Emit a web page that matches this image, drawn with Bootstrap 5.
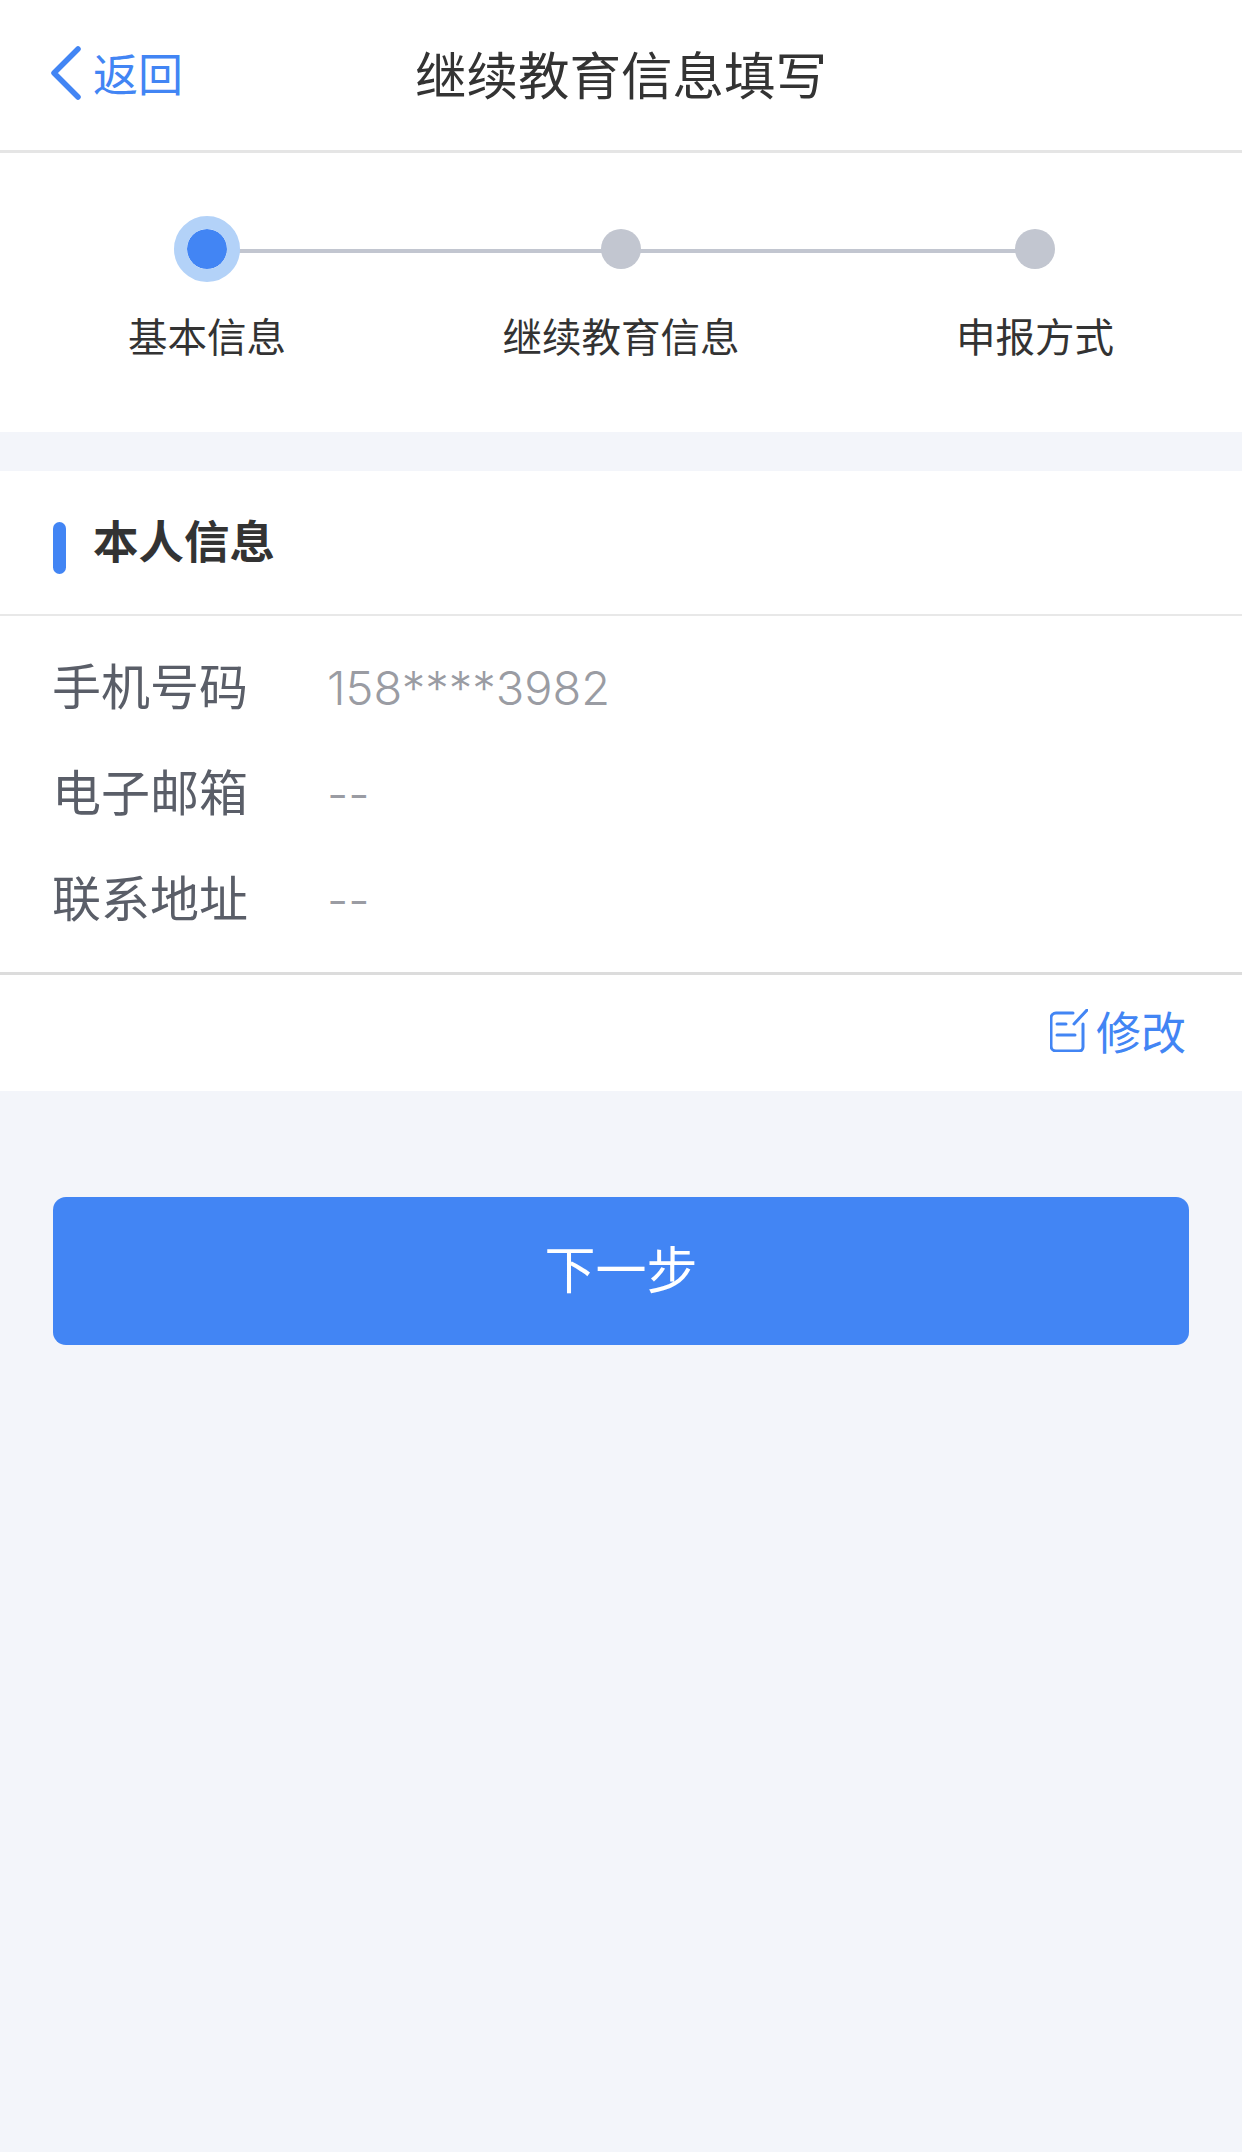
<!DOCTYPE html>
<html lang="zh">
<head>
    <meta charset="utf-8">
    <title>继续教育信息填写</title>
    <link href="https://cdn.jsdelivr.net/npm/bootstrap@5.3.0/dist/css/bootstrap.min.css" rel="stylesheet">
    <style>
        body { background: #f3f5fa; font-family: "Noto Sans CJK SC", sans-serif; color: #333; }
        .top-bar { height: 153px; display: grid; grid-template-columns: 1fr auto 1fr; align-items: center; border-bottom: 3px solid #e5e5e5; background: #fff; padding: 0 51px 5px; }
        .back-link { display: flex; align-items: center; gap: 12px; color: #4285f4; font-size: 45px; line-height: 1; text-decoration: none; }
        .page-title { font-size: 51.5px; line-height: 1; font-weight: 400; color: #333; }
        .steps { background: #fff; height: 279px; padding-top: 63px; margin-bottom: 39px; }
        .step-item { position: relative; display: flex; flex-direction: column; align-items: center; width: 414px; }
        .step-dot-wrap { height: 66px; display: flex; align-items: center; justify-content: center; position: relative; z-index: 1; }
        .step-dot { width: 40px; height: 40px; border-radius: 50%; background: #c2c6d0; }
        .step-dot.on { width: 66px; height: 66px; border: 13px solid #b3d2f8; background: #4285f4; background-clip: padding-box; }
        .step-link { position: absolute; top: 33px; left: 207px; width: 414px; height: 4px; background: #c2c6d0; }
        .step-name { margin-top: 33px; font-size: 39.5px; line-height: 1; color: #333; }
        .info-head { background: #fff; height: 145px; display: flex; align-items: center; gap: 27px; padding: 0 53px; border-bottom: 2px solid #e8e8e8; }
        .info-mark { width: 13px; height: 52px; margin-top: 10px; border-radius: 7px; background: #4285f4; }
        .info-title { font-size: 45.5px; font-weight: 700; line-height: 1; margin: 0 0 6px; color: #333; }
        .info-body { background: #fff; padding: 18px 53px 20px 52px; border-bottom: 3px solid #dcdcdc; }
        .info-row { display: flex; align-items: center; height: 106px; }
        .info-key { width: 275px; padding-bottom: 8px; font-size: 49px; line-height: 1; color: #5a5e68; }
        .info-val { font-family: Inter, sans-serif; font-weight: 300; font-size: 47px; line-height: 1; color: #9a9ca3; }
        .info-foot { background: #fff; height: 116px; display: flex; align-items: center; justify-content: flex-end; gap: 8px; padding: 0 56px 5px 0; color: #4285f4; font-size: 45px; line-height: 1; }
        .next-wrap { padding: 106px 53px 0; }
        .next-btn { height: 148px; padding-bottom: 14px; font-size: 51px; line-height: 1; color: #fff; background: #4285f4; border: 0; border-radius: 13px; }
    </style>
</head>
<body>
    <!-- Header -->
    <div class="top-bar">
        <a class="back-link" href="#">
            <svg width="30" height="54" viewBox="0 0 30 54" fill="none" stroke="#4285f4" stroke-width="5.5" stroke-linecap="round" stroke-linejoin="round"><path d="M27 3 3 27l24 24"/></svg>
            <span>返回</span>
        </a>
        <h1 class="page-title mb-0">继续教育信息填写</h1>
        <div></div>
    </div>

    <!-- Steps -->
    <div class="steps d-flex">
        <div class="step-item">
            <div class="step-link"></div>
            <div class="step-dot-wrap"><div class="step-dot on"></div></div>
            <div class="step-name">基本信息</div>
        </div>
        <div class="step-item">
            <div class="step-link"></div>
            <div class="step-dot-wrap"><div class="step-dot"></div></div>
            <div class="step-name">继续教育信息</div>
        </div>
        <div class="step-item">
            <div class="step-dot-wrap"><div class="step-dot"></div></div>
            <div class="step-name">申报方式</div>
        </div>
    </div>

    <!-- Personal info -->
    <div class="info-head">
        <div class="info-mark"></div>
        <h2 class="info-title">本人信息</h2>
    </div>
    <div class="info-body">
        <div class="info-row"><div class="info-key">手机号码</div><div class="info-val">158****3982</div></div>
        <div class="info-row"><div class="info-key">电子邮箱</div><div class="info-val">--</div></div>
        <div class="info-row"><div class="info-key">联系地址</div><div class="info-val">--</div></div>
    </div>
    <div class="info-foot">
        <svg width="38" height="43" viewBox="0 0 38 43" fill="none" stroke="#4285f4" stroke-width="3" stroke-linecap="round" stroke-linejoin="round"><path d="M23 4H6a5 5 0 0 0-5 5v28a5 5 0 0 0 5 5h23a4 4 0 0 0 4-4V15"/><path d="M37 1 24 15"/><path d="M7 15h9"/><path d="M7 26h18"/></svg>
        <span>修改</span>
    </div>

    <div class="next-wrap">
        <button type="button" class="btn next-btn w-100">下一步</button>
    </div>
</body>
</html>
